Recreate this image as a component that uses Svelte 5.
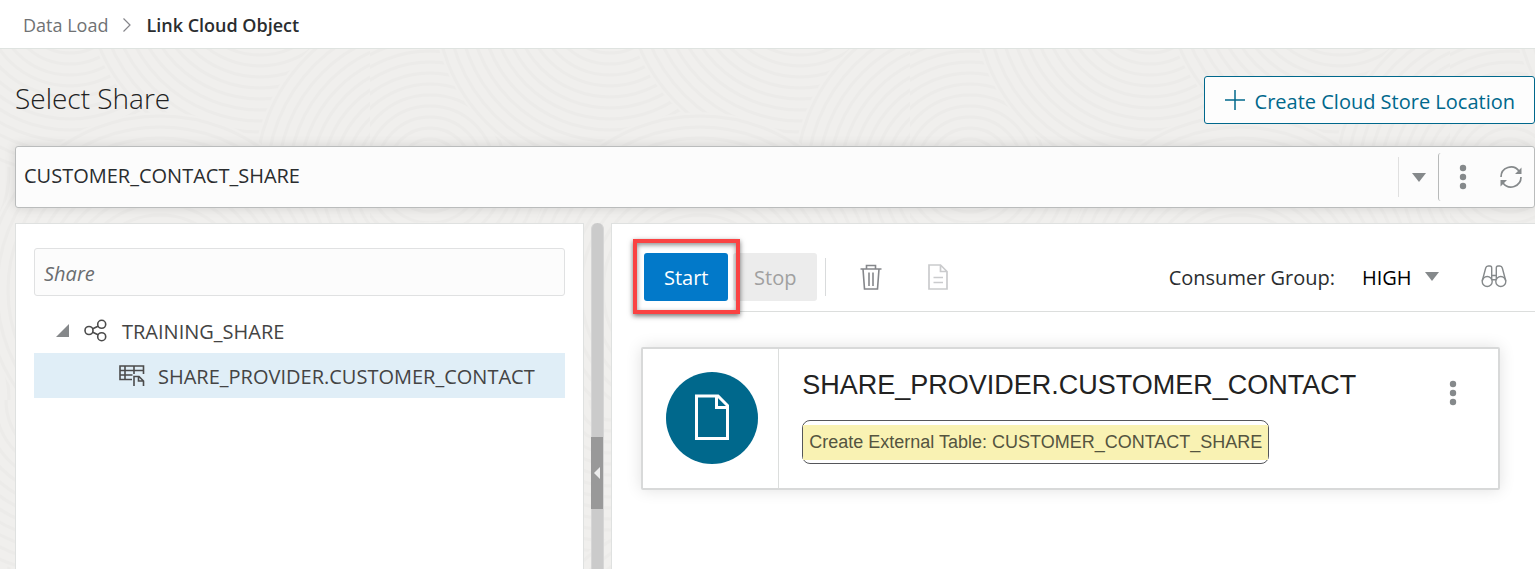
<script>
  let share = $state('CUSTOMER_CONTACT_SHARE');
  let group = $state('HIGH');
  let open = $state(true);

  const rings = Array.from({ length: 15 }, (_, i) => 20 + i * 11);
  const mounds = [
    { x: 60, y: 170 },
    { x: 240, y: 0 },
    { x: 430, y: -20 },
    { x: 600, y: 180 },
    { x: 60, y: 400 },
    { x: 330, y: 290 },
    { x: 600, y: 410 }
  ];
</script>

<div class="page">
  <svg class="texture" aria-hidden="true">
    <defs>
      <pattern id="waves" width="540" height="400" patternUnits="userSpaceOnUse" patternTransform="translate(370 0)">
        {#each mounds as m}
          <circle cx={m.x} cy={m.y} r="178" fill="#f0efed" />
          {#each rings as r}
            <circle cx={m.x} cy={m.y} {r} fill="none" stroke="#ecebe9" stroke-width="3" />
          {/each}
        {/each}
      </pattern>
    </defs>
    <rect width="100%" height="100%" fill="url(#waves)" />
  </svg>

  <nav class="crumbs" aria-label="Breadcrumb">
    <a href="#data-load">Data Load</a>
    <svg width="10" height="16" viewBox="0 0 10 16"><path d="M1.500 1.500L8 8l-6.500 6.500" fill="none" stroke="#85858a" stroke-width="1.200" /></svg>
    <strong aria-current="page">Link Cloud Object</strong>
  </nav>

  <main>
    <header class="head">
      <h1>Select Share</h1>
      <button class="create" type="button">
        <svg width="20" height="20" viewBox="0 0 20 20"><path d="M10 0v20M0 10h20" stroke="#00688c" stroke-width="1.500" /></svg>
        <span class="text">Create Cloud Store Location</span>
      </button>
    </header>

    <div class="bar">
      <select class="share" aria-label="Share" bind:value={share}>
        <option>CUSTOMER_CONTACT_SHARE</option>
      </select>
      <span class="drop"><svg width="14" height="9" viewBox="0 0 14 9"><path d="M0 0h14L7 9z" fill="#85898b" /></svg></span>
      <div class="tools">
        <button class="icon" type="button" aria-label="More actions">
          <svg width="8" height="26" viewBox="0 0 8 26" fill="#85898b"><circle cx="4" cy="4" r="3.200" /><circle cx="4" cy="13" r="3.200" /><circle cx="4" cy="22" r="3.200" /></svg>
        </button>
        <button class="icon" type="button" aria-label="Refresh">
          <svg width="24" height="24" viewBox="0 0 24 24">
            <path d="M2 12A10 10 0 0 1 20 6M22 12A10 10 0 0 1 4 18" fill="none" stroke="#85898b" stroke-width="1.700" />
            <path d="M22.500 2.500V9H16zM1.500 21.500V15H8z" fill="#85898b" />
          </svg>
        </button>
      </div>
    </div>

    <div class="split">
      <section class="panel side">
        <input type="text" placeholder="Share" aria-label="Search share" />
        <ul class="tree">
          <li>
            <div class="row">
              <button class="icon" type="button" aria-label="Toggle TRAINING_SHARE" aria-expanded={open} onclick={() => (open = !open)}>
                <svg width="13" height="13" viewBox="0 0 12 12"><path d="M12 0v12H0z" fill="#85888a" /></svg>
              </button>
              <svg width="23" height="23" viewBox="0 0 23 23" fill="none" stroke="#4b4b4b" stroke-width="1.600">
                <circle cx="5" cy="11.500" r="4" /><circle cx="17.700" cy="5.300" r="4" /><circle cx="17.700" cy="17.700" r="4" />
                <path d="M8.800 9.800l5.200-2.600M8.800 13.200l5.200 2.600" />
              </svg>
              <span class="text">TRAINING_SHARE</span>
            </div>
            {#if open}
              <ul>
                <li class="row child">
                  <svg width="26" height="22" viewBox="0 0 26 22" fill="none" stroke="#4b4b4b" stroke-width="1.600">
                    <path d="M13 14.500H1V1h23.500v8M1 5.500h23.500M1 10h12.500M6 1v13.500M15 1v8M15 21v-9.500h5l4.500 4.500v5M19.500 11.500V16h5" />
                  </svg>
                  <span class="text">SHARE_PROVIDER.CUSTOMER_CONTACT</span>
                </li>
              </ul>
            {/if}
          </li>
        </ul>
      </section>

      <div class="gutter">
        <button type="button" aria-label="Collapse panel">
          <svg width="6" height="12" viewBox="0 0 6 12"><path d="M6 0v12L0 6z" fill="#ededed" /></svg>
        </button>
      </div>

      <section class="panel work">
        <div class="toolbar">
          <div class="marked"><button class="start" type="button">Start</button></div>
          <button class="stop" type="button" disabled>Stop</button>
          <span class="rule"></span>
          <button class="icon trash" type="button" aria-label="Remove">
            <svg width="22" height="26" viewBox="0 0 22 26" fill="none" stroke="#85878b" stroke-width="1.600">
              <path d="M0.500 5h21M6.500 5V1.500h9V5M3 5l1.500 20h13L19 5M9 8.500V22M13 8.500V22" />
            </svg>
          </button>
          <button class="icon" type="button" aria-label="Report">
            <svg width="20" height="26" viewBox="0 0 20 26" fill="none" stroke="#cacbcd" stroke-width="1.700">
              <path d="M1 1h11.500L19 7.500V25H1zM12.500 1v6.500H19M5.500 13.500h9.500M5.500 18.500h9.500" />
            </svg>
          </button>
          <div class="group">
            <label class="text" for="group">Consumer Group:</label>
            <select class="text" id="group" bind:value={group}>
              <option>HIGH</option>
            </select>
            <svg width="14" height="9" viewBox="0 0 14 9"><path d="M0 0h14L7 9z" fill="#85898b" /></svg>
          </div>
          <button class="icon find" type="button" aria-label="Find">
            <svg width="26" height="23" viewBox="0 0 26 23" fill="none" stroke="#85898b" stroke-width="1.400">
              <circle cx="6.200" cy="16.500" r="5" /><circle cx="19.800" cy="16.500" r="5" />
              <path d="M1.200 16L4.700 3Q5.200 1 7.200 1H9Q10.700 1 10.700 3V14.500M24.800 16L21.300 3Q20.800 1 18.800 1H17Q15.300 1 15.300 3V14.500M10.700 10.500h4.600M10.700 14.800h4.600" />
            </svg>
          </button>
        </div>

        <article class="card">
          <div class="badge">
            <svg width="92" height="92" viewBox="0 0 92 92">
              <circle cx="46" cy="46" r="46" fill="#00688c" />
              <path d="M30.500 24h21.500L61.500 33.500V66.500h-31zM50.500 24v11.500h11" fill="none" stroke="#fff" stroke-width="3" />
            </svg>
          </div>
          <div class="info">
            <h2>SHARE_PROVIDER.CUSTOMER_CONTACT</h2>
            <div class="tag"><span>Create External Table: CUSTOMER_CONTACT_SHARE</span></div>
          </div>
          <button class="icon more" type="button" aria-label="Card actions">
            <svg width="8" height="26" viewBox="0 0 8 26" fill="#85898b"><circle cx="4" cy="4" r="3.200" /><circle cx="4" cy="13" r="3.200" /><circle cx="4" cy="22" r="3.200" /></svg>
          </button>
        </article>
      </section>
    </div>
  </main>
</div>

<style>
  :global(body) { margin: 0; }
  * { box-sizing: border-box; }
  svg { display: block; flex: none; }
  .page {
    position: relative;
    isolation: isolate;
    display: flex;
    flex-direction: column;
    min-height: 100vh;
    overflow: hidden;
    background: #f0efed;
    color: #2a2d2f;
    font: 20px/28px 'Open Sans', 'Noto Sans', sans-serif;
  }
  .texture { position: absolute; inset: 0; z-index: -1; width: 100%; height: 100%; }
  button, select, input { font: inherit; color: inherit; }
  button { cursor: pointer; }
  select { appearance: none; border: 0; background: none; padding: 0; outline: 0; }
  .icon { display: flex; padding: 0; border: 0; background: none; }
  .text { padding-top: 3px; }

  .crumbs {
    display: flex;
    align-items: center;
    gap: 14px;
    height: 49px;
    padding: 2px 0 0 23px;
    background: #fff;
    border-bottom: 1px solid #dfe3e0;
    font-size: 18px;
  }
  .crumbs a { color: #707274; text-decoration: none; }
  .crumbs strong { font-weight: 600; }

  main { flex: 1; display: flex; flex-direction: column; padding-left: 15px; }
  .head { display: flex; align-items: center; justify-content: space-between; height: 97px; }
  h1 { margin: 0; font-size: 28px; line-height: 40px; font-weight: 300; color: #222; }
  .create {
    display: flex;
    align-items: center;
    gap: 10px;
    height: 48px;
    margin-top: 5px;
    padding: 0 19px 0 20px;
    border: 1px solid #00688c;
    border-radius: 3px;
    background: #fdfdfd;
    color: #00688c;
  }

  .bar {
    display: flex;
    align-items: center;
    height: 62px;
    border: 1px solid #babcbc;
    border-radius: 3px;
    background: #fcfcfc;
    box-shadow: 0 0 12px rgb(0 0 0 / 12%);
  }
  .share { flex: 1; height: 100%; padding: 0 0 2px 8px; }
  .drop { display: grid; place-items: center; width: 40px; height: 40px; border-left: 1px solid #e0e0e0; }
  .tools {
    display: flex;
    align-items: center;
    justify-content: space-between;
    width: 96px;
    height: 48px;
    padding: 0 11px 0 20px;
    border-left: 1px solid #b8baba;
    border-radius: 3px;
  }

  .split { flex: 1; display: flex; margin-top: 15px; }
  .panel { background: #fff; border: 1px solid #dfe1e0; border-bottom: 0; }
  .side { flex: 0 0 clamp(320px, 37.45%, 720px); padding: 24px 18px; }
  .side input {
    display: block;
    width: 100%;
    height: 48px;
    padding: 3px 9px 0;
    border: 1px solid #e0e1e2;
    border-radius: 3px;
    background: #fcfcfc;
    outline: 0;
  }
  .side input::placeholder { color: #6b6d70; font-style: italic; opacity: 1; }
  ul { margin: 0; padding: 0; list-style: none; }
  .tree { margin-top: 12px; color: #444; }
  .row { display: flex; align-items: center; gap: 15px; height: 45px; padding-left: 22px; }
  .child { gap: 13px; padding-left: 85px; background: #e0eef7; }

  .gutter {
    flex: 0 0 12px;
    margin: 0 7px;
    padding-top: 214px;
    border: solid #d6d6d6;
    border-width: 0 1px;
    border-radius: 6px 6px 0 0;
    background: #cbcbcb;
  }
  .gutter button {
    display: grid;
    place-items: center;
    width: 12px;
    height: 72px;
    margin-left: -1px;
    padding: 0;
    border: 0;
    background: #999;
  }

  .work { flex: 1; min-width: 0; border-right: 0; }
  .toolbar {
    display: flex;
    align-items: center;
    height: 88px;
    margin-left: 21px;
    padding: 18px 28px 0 11px;
    border-bottom: 1px solid #dcdedd;
  }
  .marked { position: relative; }
  .marked::after {
    content: '';
    position: absolute;
    inset: -14px -12px -13px -11px;
    border: 4px solid #fa4343;
    box-shadow: 0 2px 5px rgb(0 0 0 / 55%), inset 0 2px 5px rgb(0 0 0 / 45%);
    pointer-events: none;
  }
  .start, .stop { width: 84px; height: 48px; padding: 3px 0 0; border: 0; border-radius: 3px; }
  .start { background: #0279c9; color: #fff; }
  .stop { margin-left: 5px; background: #ececec; color: #a0a0a0; }
  .rule { width: 1px; height: 38px; margin-left: 8px; background: #d9dbdc; }
  .trash { margin: 0 46px 0 34px; }
  .group { display: flex; align-items: center; gap: 13px; margin-left: auto; }
  .group select { margin-left: 14px; color: #000; }
  .find { margin-left: 42px; }

  .card {
    display: flex;
    margin: 35px 35px 0 29px;
    border: 2px solid #d8d9d9;
    border-radius: 2px;
    background: #fff;
    box-shadow: 0 0 16px rgb(0 0 0 / 12%);
  }
  .badge { padding: 23px 20px 24px 23px; border-right: 1px solid #dcdedd; }
  .info { flex: 1; padding: 20px 0 0 23px; font-family: 'Liberation Sans', Arial, sans-serif; }
  h2 { margin: 0; font-size: 27px; line-height: 32px; font-weight: 400; color: #222; }
  .tag {
    width: fit-content;
    margin-top: 19px;
    padding: 4px 0 3px;
    border: 1px solid #55565a;
    border-radius: 8px;
    font-size: 18px;
    line-height: 35px;
    color: #54543f;
  }
  .tag span { display: block; padding: 0 6px; background: #f9f2b3; }
  .more { align-self: flex-start; margin: 31px 41px 0 0; }
</style>
